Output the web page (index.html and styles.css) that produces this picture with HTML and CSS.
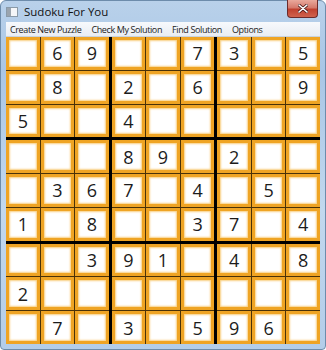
FILE: index.html
```html
<!DOCTYPE html>
<html lang="en">
<head>
  <meta charset="UTF-8">
  <title>Sudoku For You</title>
  <link rel="stylesheet" href="styles.css">
</head>
<body>
  <!-- Main window frame -->
  <div class="window">
    <div class="titlebar">
      <svg class="app-icon" width="12" height="10" viewBox="0 0 12 10">
        <rect x="0.5" y="0.5" width="11" height="9" fill="#f4f6f8" stroke="#8a9aa8"/>
        <rect x="1" y="1" width="4" height="8" fill="#9aa4ae"/>
      </svg>
      <span class="title-text">Sudoku For You</span>
      <div class="close-btn">
        <svg width="10" height="9" viewBox="0 0 10 9">
          <path d="M1 1 L9 8 M9 1 L1 8" stroke="#4a1a1a" stroke-width="3" stroke-linecap="round"/>
          <path d="M1 1 L9 8 M9 1 L1 8" stroke="#fff" stroke-width="1.6" stroke-linecap="round"/>
        </svg>
      </div>
    </div>

    <!-- Menu -->
    <div class="menubar">
      <span class="menu-item">Create New Puzzle</span>
      <span class="menu-item">Check My Solution</span>
      <span class="menu-item">Find Solution</span>
      <span class="menu-item">Options</span>
    </div>

    <!-- Board, filled in by the script below -->
    <div class="board" id="board"></div>
  </div>

  <script>
    // Puzzle rows, 0 = empty
    const puzzle = [
      '069007305',
      '080206009',
      '500400000',
      '000890200',
      '036704050',
      '108003704',
      '003910408',
      '200000000',
      '070305960'
    ];

    const board = document.getElementById('board');

    // Build 3x3 boxes, each holding 3x3 cells
    for (let b = 0; b < 9; b++) {
      const box = document.createElement('div');
      box.className = 'box';
      const rowStart = Math.floor(b / 3) * 3;
      const colStart = (b % 3) * 3;
      for (let i = 0; i < 9; i++) {
        const r = rowStart + Math.floor(i / 3);
        const c = colStart + (i % 3);
        const value = puzzle[r][c];
        const cell = document.createElement('div');
        cell.className = 'cell';
        const inner = document.createElement('div');
        inner.className = 'cell-inner';
        inner.textContent = value === '0' ? '' : value;
        cell.appendChild(inner);
        box.appendChild(cell);
      }
      board.appendChild(box);
    }
  </script>
</body>
</html>
```

FILE: styles.css
```css
body {
  margin: 0;
  background: #fff;
  font-family: "Open Sans", "Noto Sans", sans-serif;
}

/* Window frame with the light blue glass look */
.window {
  width: 326px;
  height: 350px;
  box-sizing: border-box;
  display: flex;
  flex-direction: column;
  border: 1px solid #6d8cab;
  border-radius: 6px 6px 4px 4px;
  background: linear-gradient(180deg, #b9d1ea 0%, #a9c6e6 20%, #c2d8ee 60%, #b3cde9 100%);
  padding: 0 5px 5px 5px;
}

.titlebar {
  height: 21px;
  display: flex;
  align-items: center;
  position: relative;
}

.app-icon {
  margin-right: 6px;
}

.title-text {
  font-size: 11.5px;
  color: #111;
}

.close-btn {
  position: absolute;
  right: 2px;
  top: -1px;
  width: 29px;
  height: 17px;
  border: 1px solid #6b2b2b;
  border-top: none;
  border-radius: 0 0 4px 4px;
  background: linear-gradient(180deg, #e9a99c 0%, #d57a6c 45%, #c0412f 55%, #d0634e 100%);
  display: flex;
  align-items: center;
  justify-content: center;
}

/* Menu strip */
.menubar {
  height: 14px;
  display: flex;
  align-items: center;
  gap: 10px;
  padding-left: 4px;
  background: linear-gradient(180deg, #f7f9fc 0%, #e9edf3 100%);
  border-bottom: 1px solid #c9d3de;
}

.menu-item {
  font-size: 9px;
  color: #1a1a1a;
  letter-spacing: -0.38px;
}

/* Board: thick black lines between boxes */
.board {
  flex: 1;
  display: grid;
  grid-template-columns: repeat(3, 1fr);
  grid-template-rows: repeat(3, 1fr);
  gap: 3px;
  background: #000;
}

.box {
  display: grid;
  grid-template-columns: repeat(3, 1fr);
  grid-template-rows: repeat(3, 1fr);
  gap: 1px;
  background: #4a3208;
}

.cell {
  background: #efa424;
  padding: 3px;
  display: flex;
}

.cell-inner {
  flex: 1;
  background: #fff;
  box-shadow: inset 0 0 2px 1px #f9cf80;
  display: flex;
  align-items: center;
  justify-content: center;
  font-size: 18px;
  color: #1c1c1c;
}
```
